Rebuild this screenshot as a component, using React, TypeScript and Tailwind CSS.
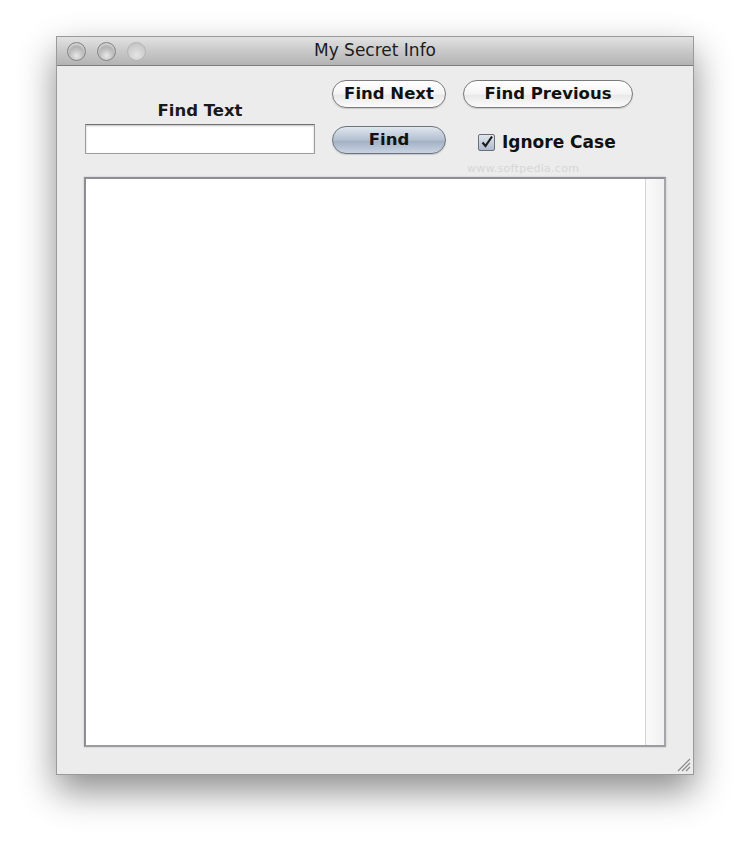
function Light({ faded = false }: { faded?: boolean }) {
  return (
    <span
      className={
        faded
          ? "block h-[19px] w-[19px] rounded-full border border-[#b4b4b4] bg-[radial-gradient(circle_at_50%_70%,#e4e4e4_0%,#cfcfcf_55%,#bdbdbd_100%)]"
          : "block h-[19px] w-[19px] rounded-full border border-[#858585] bg-[radial-gradient(circle_at_50%_75%,#e8e8e8_0%,#b9b9b9_50%,#8f8f8f_100%)] shadow-[inset_0_2px_2px_rgba(255,255,255,0.6)]"
      }
    />
  );
}

function PillButton({
  children,
  width,
  primary = false,
}: {
  children: string;
  width: string;
  primary?: boolean;
}) {
  return (
    <button
      className={
        (primary
          ? "border-[#6d737c] bg-[linear-gradient(#dfe6ef,#b4c0d0_50%,#a3b1c4_55%,#c9d4e2)] "
          : "border-[#7a7a7a] bg-[linear-gradient(#ffffff,#f4f4f4_50%,#e9e9e9_55%,#fbfbfb)] ") +
        width +
        " flex h-[28px] items-center justify-center rounded-full border text-[16.5px] font-bold text-[#111] shadow-[0_1px_1px_rgba(0,0,0,0.15)]"
      }
    >
      {children}
    </button>
  );
}

export default function App() {
  return (
    <main
      className="min-h-[852px] bg-white pl-[56px] pt-[36px]"
      style={{ fontFamily: '"DejaVu Sans", "Liberation Sans", sans-serif' }}
    >
      <div className="flex h-[739px] w-[638px] flex-col border border-[#9a9a9a] bg-[#ececec] shadow-[0_16px_34px_rgba(0,0,0,0.45)]">
        {/* title bar */}
        <div className="relative flex h-[29px] shrink-0 items-center border-b border-[#7e7e7e] bg-[linear-gradient(#e2e2e2,#c9c9c9_50%,#b3b3b3)] pl-[10px]">
          <div className="flex gap-[11px]">
            <Light />
            <Light />
            <Light faded />
          </div>
          <span className="absolute left-0 right-0 text-center text-[17px] text-[#1c1c1c]">
            My Secret Info
          </span>
        </div>

        {/* find controls */}
        <div className="flex h-[88px] pl-[28px] pt-[14px]">
          <div className="flex w-[230px] flex-col items-center justify-end">
            <span className="mb-[3px] text-[16.5px] font-bold leading-[20px] text-[#1a1a1a]">
              Find Text
            </span>
            <input className="h-[30px] w-full border border-[#9c9c9c] border-t-[#6f6f6f] bg-white shadow-[inset_0_1px_2px_rgba(0,0,0,0.25)] outline-none" />
          </div>

          <div className="ml-[17px] grid grid-cols-[114px_170px] grid-rows-[28px_28px] gap-x-[17px] gap-y-[18px]">
            <PillButton width="w-[114px]">Find Next</PillButton>
            <PillButton width="w-[170px]">Find Previous</PillButton>
            <PillButton width="w-[114px]" primary>
              Find
            </PillButton>
            <div className="relative flex h-[28px] items-center pl-[15px] pt-[4px] leading-[20px]">
              <span className="flex h-[17px] w-[17px] items-center justify-center rounded-[2px] border border-[#6a6f78] bg-[linear-gradient(#dfe6ef,#aebbcc)]">
                <svg width="14" height="14" viewBox="0 0 14 14">
                  <path
                    d="M2.5 7.5 L5.5 11 L12 1.5"
                    fill="none"
                    stroke="#1a1a1a"
                    strokeWidth="2.2"
                  />
                </svg>
              </span>
              <span className="ml-[7px] text-[17px] font-bold text-[#111]">
                Ignore Case
              </span>
              <span className="absolute left-[4px] top-[36px] text-[11px] leading-[14px] tracking-wide text-[#d6d6d6]">
                www.softpedia.com
              </span>
            </div>
          </div>
        </div>

        {/* text area */}
        <div className="ml-[27px] mt-[23px] flex h-[570px] w-[582px] border-2 border-[#8d8f94] border-r-[#a4a6ab] border-b-[#9a9ca1] bg-white shadow-[0_0_2px_rgba(0,0,0,0.2)]">
          <div className="flex-1" />
          <div className="w-[19px] border-l border-[#d4d4d4] bg-[linear-gradient(90deg,#fafafa,#f1f1f1)]" />
        </div>

        {/* resize grip */}
        <div className="mt-auto flex justify-end pb-[2px] pr-[2px]">
          <svg width="16" height="16" viewBox="0 0 16 16">
            <path
              d="M15 3 L3 15 M15 7 L7 15 M15 11 L11 15"
              stroke="#8a8a8a"
              strokeWidth="1.2"
            />
          </svg>
        </div>
      </div>
    </main>
  );
}
